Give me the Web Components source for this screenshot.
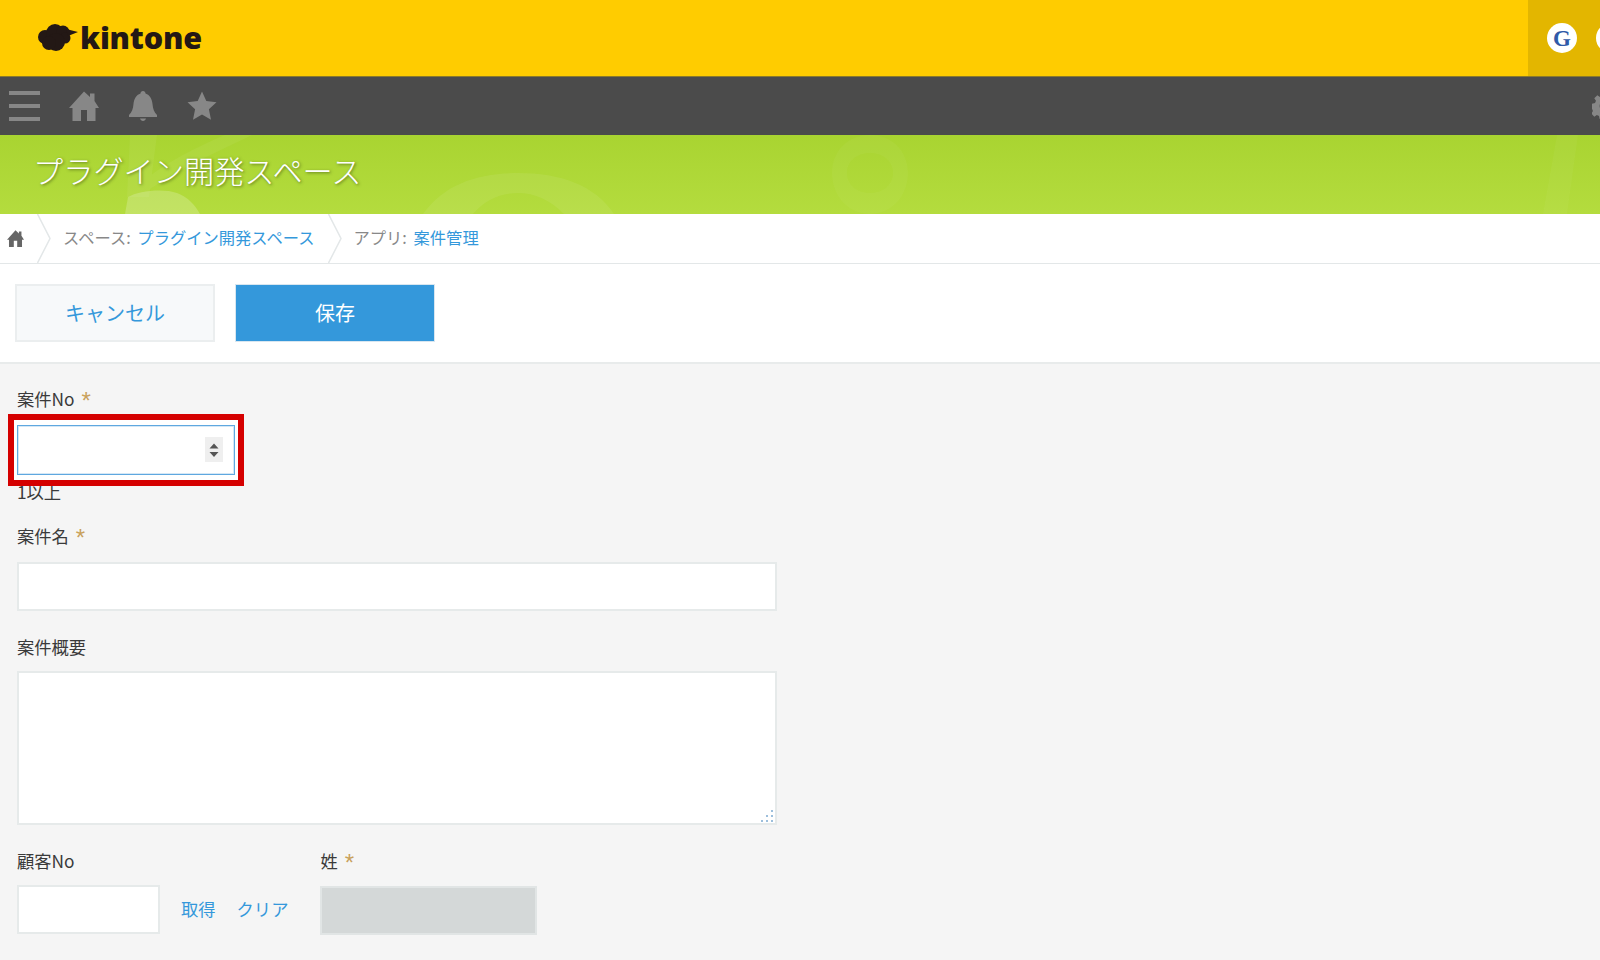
<!DOCTYPE html>
<html lang="ja">
<head>
<meta charset="utf-8">
<title>kintone</title>
<style>
html,body{margin:0;height:100%;overflow:hidden;}
body{font-family:"Noto Sans CJK JP","Liberation Sans",sans-serif;background:#f5f5f5;color:#333;}
</style>
</head>
<body>
<kt-header></kt-header>
<kt-navbar></kt-navbar>
<kt-banner>プラグイン開発スペース</kt-banner>
<kt-breadcrumb>
    <kt-crumb label="スペース:">プラグイン開発スペース</kt-crumb>
    <kt-crumb label="アプリ:">案件管理</kt-crumb>
</kt-breadcrumb>
<kt-toolbar></kt-toolbar>
<kt-form>
    <kt-field label="案件No" required number focused hint="1以上" style="--w:218px;--h:50px;--gap:13px"></kt-field>
    <kt-field label="案件名" required style="--w:760px;--h:49px;--gap:13px;--top:20px"></kt-field>
    <kt-field label="案件概要" multiline style="--w:760px;--h:154px;--gap:11px;--top:25px"></kt-field>
    <kt-row>
        <kt-field label="顧客No" style="--w:143px;--h:49px;--gap:11px">
            <a slot="after">取得</a>
            <a slot="after">クリア</a>
        </kt-field>
        <kt-field label="姓" required disabled style="--w:217px;--h:49px;--gap:12px"></kt-field>
    </kt-row>
</kt-form>

<script>
const ICONS = {
    home:'<path d="M15 .5 21 6V2.500h4.500V10L30 17h-3.500v13H18V19h-6v11H3.500V17H0z"/>',
    bell:'<path d="M15 0c1.500 0 2.500 1 2.500 2.500C22 4 24 8 24.500 13c.5 5 1.500 8 4.500 11v2H1v-2c3-3 4-6 4.500-11C6 8 8 4 12.500 2.500 12.500 1 13.500 0 15 0zM12 27.500h6c-.5 1.500-1.500 2.500-3 2.500s-2.500-1-3-2.500z"/>',
    star:'<path d="M15 .5l4.300 9.600 10.200 1.200-7.600 7 2.100 10.400L15 23.500l-9 5.200 2.100-10.400-7.600-7 10.200-1.200z"/>',
    gear:'<path d="M12 0h6l.8 4 2.900 1.200L25 3l4 4-2.200 3.300L28 13.200l2 .8v6l-4 .8-1.200 2.900L27 27l-4 4-3.300-2.200-2.900 1.200-.8 4h-6l-.8-4-2.900-1.200L3 31l-4-4 2.200-3.300L0 20.800V14l4-.8 1.200-2.900L3 7l4-4 3.300 2.200L11.200 4zM15 12a5 5 0 1 0 0 10 5 5 0 0 0 0-10z" transform="scale(.88)"/>'
};

customElements.define('kt-icon',class extends HTMLElement{
    constructor(){
        super();
        this.attachShadow({mode:'open'});
    }
    connectedCallback(){
        let size = this.getAttribute('size') || 30;
        this.shadowRoot.innerHTML = `
        <style>
            :host{display:block;line-height:0;}
            svg{fill:currentColor;display:block;}
        </style>
        <svg width="${size}" height="${size}" viewBox="0 0 30 30">${ICONS[this.getAttribute('name')]}</svg>`;
    }
});

customElements.define('kt-header',class extends HTMLElement{
    constructor(){
        super();
        this.attachShadow({mode:'open'});
        this.shadowRoot.innerHTML = `
        <style>
            :host{display:flex;height:77px;background:#fc0;overflow:hidden;box-sizing:border-box;border-bottom:1px solid #8a7a2a;}
            .logo{display:flex;align-items:center;gap:2px;margin:-1px 0 0 38px;}
            .word{font:800 30.500px/1 "Open Sans","Liberation Sans",sans-serif;color:#231815;letter-spacing:-.2px;}
            .user{margin-left:auto;width:72px;background:#e3b600;display:flex;align-items:center;gap:19px;padding-left:19px;box-sizing:border-box;flex:none;}
            .dot{flex:none;width:30px;height:30px;border-radius:50%;background:#fff;display:flex;align-items:center;justify-content:center;
                font:700 23px/1 "Liberation Serif",serif;color:#2f5aa8;}
        </style>
        <div class="logo">
            <svg width="40" height="30" viewBox="0 0 40 30">
                <g fill="#231815">
                    <circle cx="7" cy="14" r="7"/><circle cx="17" cy="10" r="9"/><circle cx="25" cy="9" r="6.500"/>
                    <circle cx="27" cy="15" r="5.500"/><circle cx="18" cy="19" r="9"/><circle cx="11" cy="20" r="7"/>
                    <path d="M28 6l12 3-10 4z"/>
                </g>
            </svg>
            <span class="word">kintone</span>
        </div>
        <div class="user"><span class="dot">G</span><span class="dot"></span></div>`;
    }
});

customElements.define('kt-navbar',class extends HTMLElement{
    constructor(){
        super();
        this.attachShadow({mode:'open'});
        this.shadowRoot.innerHTML = `
        <style>
            :host{display:flex;align-items:center;height:58px;background:#4b4b4b;color:#878787;padding-left:9px;box-sizing:border-box;overflow:hidden;}
            .menu{width:31px;height:30px;display:flex;flex-direction:column;justify-content:space-between;margin-right:29px;}
            .menu i{display:block;height:4px;background:#878787;}
            kt-icon{margin-right:29px;}
            kt-icon[name=gear]{margin:0 -18px 0 auto;}
        </style>
        <div class="menu"><i></i><i></i><i></i></div>
        <kt-icon name="home"></kt-icon>
        <kt-icon name="bell"></kt-icon>
        <kt-icon name="star"></kt-icon>
        <kt-icon name="gear" size="26"></kt-icon>`;
    }
});

customElements.define('kt-banner',class extends HTMLElement{
    constructor(){
        super();
        this.attachShadow({mode:'open'});
        this.shadowRoot.innerHTML = `
        <style>
            :host{display:grid;height:79px;background:linear-gradient(#a9d431,#b4dc3e);overflow:hidden;}
            svg,.title{grid-area:1/1;}
            .title{display:flex;align-items:center;padding:0 0 9px 33px;font-size:30.200px;font-weight:300;color:#fff;white-space:nowrap;
                text-shadow:1px 1px 3px rgba(60,80,20,.7);z-index:1;}
        </style>
        <svg width="1600" height="79" viewBox="0 0 1600 79" fill="#fff">
            <path opacity=".05" d="M130 0h27l-8 62h-22zM225 0h27C215 18 165 40 140 62h-13C150 35 190 15 225 0z"/>
            <path opacity=".2" d="M125 79l3-17c10-6 35-9 49-4 11 4 18 12 23 21z"/>
            <path opacity=".07" d="M423 79C445 48 480 38 518 38 560 38 595 50 614 79H564C550 65 535 58 518 58 500 58 485 65 473 79z"/>
            <path opacity=".035" fill-rule="evenodd" d="M870 0c23 0 38 17 38 38s-15 41-38 41-38-20-38-41 15-38 38-38zm0 18c-14 0-23 9-23 20s9 20 23 20 23-9 23-20-9-20-23-20z"/>
            <path opacity=".035" d="M1557 0h21L1567 79h-24z"/>
        </svg>
        <div class="title"><slot></slot></div>`;
    }
});

customElements.define('kt-breadcrumb',class extends HTMLElement{
    constructor(){
        super();
        this.attachShadow({mode:'open'});
        this.shadowRoot.innerHTML = `
        <style>
            :host{display:flex;align-items:flex-start;height:50px;background:#fff;border-bottom:1px solid #e3e7e8;box-sizing:border-box;color:#666;}
            .home{width:37px;padding:16px 0 0 7px;box-sizing:border-box;}
        </style>
        <div class="home"><kt-icon name="home" size="17"></kt-icon></div>
        <slot></slot>`;
    }
});

customElements.define('kt-crumb',class extends HTMLElement{
    constructor(){
        super();
        this.attachShadow({mode:'open'});
        this.shadowRoot.innerHTML = `
        <style>
            :host{display:flex;align-items:center;height:49px;font-size:16.300px;color:#888;}
            svg{flex:none;}
            .text{padding:0 13px 4px 12px;white-space:nowrap;}
            .link{color:#3498db;margin-left:3px;}
        </style>
        <svg width="14" height="49" viewBox="0 0 14 49"><path d="M.5 0 13 24.500 .5 49" fill="none" stroke="#e3e7e8" stroke-width="1.500"/></svg>
        <span class="text"><span class="lab"></span> <span class="link"><slot></slot></span></span>`;
        this.shadowRoot.querySelector('.lab').textContent = this.getAttribute('label');
    }
});

customElements.define('kt-toolbar',class extends HTMLElement{
    constructor(){
        super();
        this.attachShadow({mode:'open'});
        this.shadowRoot.innerHTML = `
        <style>
            :host{display:flex;gap:20px;height:100px;padding:20px 0 0 15px;box-sizing:border-box;background:#fff;border-bottom:2px solid #e8ebeb;}
            button{width:200px;height:58px;font:20px "Noto Sans CJK JP",sans-serif;box-sizing:border-box;padding:0 0 1px;}
            .cancel{background:#f7f9fa;border:2px solid #ebeeef;color:#3498db;}
            .save{background:#3498db;border:1px solid #d8e6f0;color:#fff;}
        </style>
        <button class="cancel">キャンセル</button>
        <button class="save">保存</button>`;
    }
});

customElements.define('kt-form',class extends HTMLElement{
    constructor(){
        super();
        this.attachShadow({mode:'open'});
        this.shadowRoot.innerHTML = `
        <style>
            :host{display:block;padding:24px 0 0 17px;}
        </style>
        <slot></slot>`;
    }
});

customElements.define('kt-row',class extends HTMLElement{
    constructor(){
        super();
        this.attachShadow({mode:'open'});
        this.shadowRoot.innerHTML = `
        <style>
            :host{display:flex;margin-top:25px;}
        </style>
        <slot></slot>`;
    }
});

customElements.define('kt-field',class extends HTMLElement{
    constructor(){
        super();
        this.attachShadow({mode:'open'});
        let multiline = this.hasAttribute('multiline');
        let control = multiline ? '<textarea></textarea>' : '<input type="text">';
        if(this.hasAttribute('disabled')) control = '<input type="text" disabled>';
        let hint = this.getAttribute('hint');
        this.shadowRoot.innerHTML = `
        <style>
            :host{display:block;margin-top:var(--top,0);font-size:17.300px;color:#3a3a3a;}
            .label{height:24px;line-height:21px;margin-bottom:var(--gap,12px);white-space:nowrap;}
            .star{color:#c9a15c;font:24px/16px "Liberation Sans",sans-serif;margin-left:7px;vertical-align:-3px;}
            .line{display:flex;align-items:center;}
            .box{position:relative;width:var(--w);height:var(--h);flex:none;}
            input,textarea{position:relative;z-index:1;display:block;width:100%;height:100%;box-sizing:border-box;margin:0;padding:0 8px;
                border:2px solid #e6eaea;background:#fff;outline:none;resize:none;border-radius:0;font:inherit;}
            input:disabled{background:#d4d8d8;border-color:#e1e5e5;}
            .focused input{border:1px solid #5fa8e0;box-shadow:inset 0 0 0 1px #d5e7f5;}
            .spin{position:absolute;z-index:2;top:12px;right:12px;width:18px;height:25px;background:#efefef;display:flex;align-items:center;justify-content:center;}
            .grip{position:absolute;z-index:2;right:3px;bottom:2px;}
            .mark{position:absolute;left:-9px;top:-11px;width:236px;height:72px;box-sizing:border-box;border:6px solid #d50000;background:#fff;}
            .hint{margin-top:6px;height:24px;line-height:21px;}
            .after{display:flex;gap:21px;margin-left:21px;margin-right:32px;padding-bottom:3px;}
            .after ::slotted(a){color:#3498db;}
        </style>
        <div class="label"></div>
        <div class="line">
            <div class="box ${this.hasAttribute('focused')?'focused':''}">
                ${this.hasAttribute('focused')?'<div class="mark"></div>':''}
                ${control}
                ${this.hasAttribute('number')?`<div class="spin"><svg width="12" height="20" viewBox="0 0 12 20"><path fill="#555" d="M6 3.500l4.500 5h-9zM1.500 12h9L6 17z"/></svg></div>`:''}
                ${multiline?`<svg class="grip" width="14" height="14" viewBox="0 0 14 14"><path fill="#9dbfdc" d="M11 1h2v2h-2zM11 6h2v2h-2zM6 6h2v2H6zM11 11h2v2h-2zM6 11h2v2H6zM1 11h2v2H1z"/></svg>`:''}
            </div>
            <div class="after"><slot name="after"></slot></div>
        </div>
        ${hint?`<div class="hint">${hint}</div>`:''}`;
        let label = this.shadowRoot.querySelector('.label');
        label.textContent = this.getAttribute('label');
        if(this.hasAttribute('required')){
            let star = document.createElement('span');
            star.className = 'star';
            star.textContent = '*';
            label.appendChild(star);
        }
    }
});
</script>
</body>
</html>
